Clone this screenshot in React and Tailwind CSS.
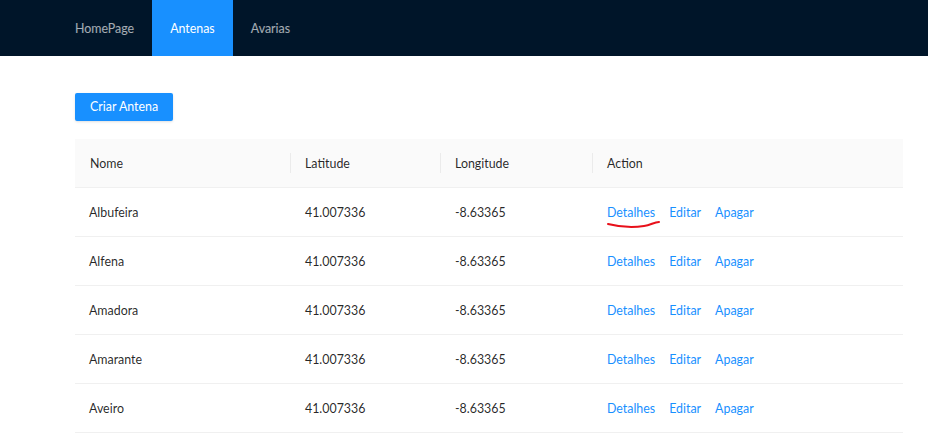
import React from 'react';

const ROWS = ['Albufeira', 'Alfena', 'Amadora', 'Amarante', 'Aveiro'];
const MENU = ['HomePage', 'Antenas', 'Avarias'];

function HeadCell({ children, divider, className = '' }) {
  return (
    <div className={`relative flex items-center px-[15px] pt-[2px] ${className}`}>
      {divider && <span className="absolute left-0 top-1/2 -translate-y-1/2 w-px h-[20px] bg-black/[0.06]" />}
      {children}
    </div>
  );
}

export default function App() {
  return (
    <div className="min-h-[437px] bg-white text-[12.4px] text-black/85" style={{ fontFamily: 'Lato, "Noto Sans", sans-serif' }}>
      {/* top nav */}
      <header className="h-[56px] bg-[#001529] flex pl-[57px]">
        {MENU.map(m => (
          <div
            key={m}
            className={`flex items-center px-[18px] pt-[2px] ${m === 'Antenas' ? 'bg-[#1890ff] text-white' : 'text-white/65'}`}
          >
            {m}
          </div>
        ))}
      </header>

      <main className="pl-[75px] pr-[25px] pt-[37px]">
        <button className="h-[28px] px-[15px] pt-[1px] rounded-[2px] bg-[#1890ff] text-white shadow-sm">
          Criar Antena
        </button>

        <div className="mt-[18px] w-[828px]">
          <div className="grid grid-cols-[215px_150px_152px_311px] h-[49px] bg-[#fafafa] border-b border-[#f0f0f0]">
            <HeadCell>Nome</HeadCell>
            <HeadCell divider>Latitude</HeadCell>
            <HeadCell divider>Longitude</HeadCell>
            <HeadCell divider>Action</HeadCell>
          </div>
          {ROWS.map((r, i) => (
            <div key={r} className="grid grid-cols-[215px_150px_152px_311px] h-[49px] border-b border-[#f0f0f0]">
              <div className="flex items-center px-[14px] pt-[2px]">{r}</div>
              <div className="flex items-center px-[15px] pt-[2px]">41.007336</div>
              <div className="flex items-center px-[15px] pt-[2px]">-8.63365</div>
              <div className="relative flex items-center gap-[14px] px-[15px] pt-[2px] text-[#1890ff]">
                <span>Detalhes</span>
                <span>Editar</span>
                <span>Apagar</span>
                {i === 0 && (
                  <svg className="absolute left-[14px] top-[32px]" width="56" height="10" viewBox="0 0 56 10">
                    <path d="M2 4 C 14 7, 26 8, 38 6 C 45 5, 48 2, 53 2" fill="none" stroke="#e8101a" strokeWidth="2" strokeLinecap="round" />
                  </svg>
                )}
              </div>
            </div>
          ))}
        </div>
      </main>
    </div>
  );
}
